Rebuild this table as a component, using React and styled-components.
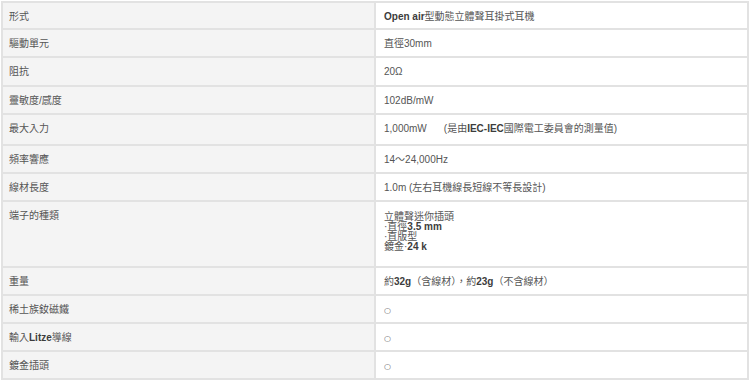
import React from "react"
import styled, { createGlobalStyle } from "styled-components"

const GlobalStyle = createGlobalStyle`
  body {
    margin: 0;
    background: #fff;
    font-family: "Liberation Sans", "Noto Sans CJK TC", sans-serif;
  }
`

const Page = styled.div`
  padding: 1px 1px 0 1px;
`

const SpecTable = styled.table`
  width: 748px;
  border-collapse: collapse;
  table-layout: fixed;
  font-size: 10px;
  line-height: 12px;
  color: #555;

  td {
    box-sizing: border-box;
    border: 2px solid #e2e2e2;
    vertical-align: top;
    padding: 8px 6px 0 6px;
  }
`

const Label = styled.td`
  width: 373px;
  background: #f4f4f4;
  color: #555;
`

const Value = styled.td`
  background: #fff;
  color: #555;
  padding-left: 8px !important;
`

const B = styled.b`
  font-weight: 700;
  color: #3c3c3c;
`

const Note = styled.span`
  margin-left: 17px;
`

const Lines = styled.div`
  line-height: 10px;
  font-size: 10px;
  padding-top: 2px;
`

const Mark = styled.span`
  font-family: "DejaVu Sans", sans-serif;
  font-size: 8px;
  color: #666;
`

const getRows = () => [
  { label: "形式", h: 27, value: <><B>Open air</B>型動態立體聲耳掛式耳機</> },
  { label: "驅動單元", h: 28, value: "直徑30mm" },
  { label: "阻抗", h: 29, value: "20Ω" },
  { label: "靈敏度/感度", h: 28, value: "102dB/mW" },
  {
    label: "最大入力",
    h: 31,
    value: (
      <>
        1,000mW<Note>(是由<B>IEC-IEC</B>國際電工委員會的測量值)</Note>
      </>
    ),
  },
  { label: "頻率響應", h: 28, value: "14～24,000Hz" },
  { label: "線材長度", h: 28, value: "1.0m (左右耳機線長短線不等長設計)" },
  {
    label: "端子的種類",
    h: 66,
    value: (
      <Lines>
        <div>立體聲迷你插頭</div>
        <div>·直徑<B>3.5 mm</B></div>
        <div>·直版型</div>
        <div>鍍金·<B>24 k</B></div>
      </Lines>
    ),
  },
  {
    label: "重量",
    h: 28,
    value: (
      <>
        約<B>32g</B>（含線材），約<B>23g</B>（不含線材）
      </>
    ),
  },
  { label: "稀土族釹磁鐵", h: 28, value: <Mark>○</Mark> },
  { label: <>輸入<B>Litze</B>導線</>, h: 28, value: <Mark>○</Mark> },
  { label: "鍍金插頭", h: 28, value: <Mark>○</Mark> },
]

const App = () => (
  <Page>
    <GlobalStyle />
    <SpecTable>
      <tbody>
        {getRows().map((row, i) => (
          <tr key={i} style={{ height: row.h }}>
            <Label>{row.label}</Label>
            <Value>{row.value}</Value>
          </tr>
        ))}
      </tbody>
    </SpecTable>
  </Page>
)

export default App
